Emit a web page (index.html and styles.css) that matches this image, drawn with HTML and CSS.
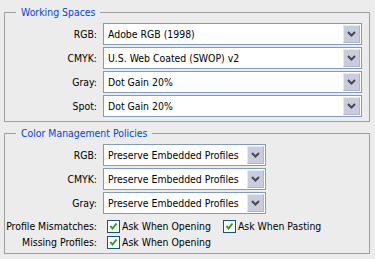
FILE: index.html
```html
<html>
    <head>
        <title>Color Settings</title>
        <link rel="stylesheet" href="styles.css">
    </head>
    <body>
        <div class="dialog">
            <fieldset class="group">
                <legend>Working Spaces</legend>
                <div class="rows">
                    <span class="lbl">RGB:</span>
                    <div class="combo wide"><span class="val">Adobe RGB (1998)</span><span class="btn"><svg width="9" height="6" viewBox="0 0 9 6"><polyline points="1,1 4.5,4.5 8,1" /></svg></span></div>
                    <span class="lbl">CMYK:</span>
                    <div class="combo wide"><span class="val">U.S. Web Coated (SWOP) v2</span><span class="btn"><svg width="9" height="6" viewBox="0 0 9 6"><polyline points="1,1 4.5,4.5 8,1" /></svg></span></div>
                    <span class="lbl">Gray:</span>
                    <div class="combo wide"><span class="val">Dot Gain 20%</span><span class="btn"><svg width="9" height="6" viewBox="0 0 9 6"><polyline points="1,1 4.5,4.5 8,1" /></svg></span></div>
                    <span class="lbl">Spot:</span>
                    <div class="combo wide"><span class="val">Dot Gain 20%</span><span class="btn"><svg width="9" height="6" viewBox="0 0 9 6"><polyline points="1,1 4.5,4.5 8,1" /></svg></span></div>
                </div>
            </fieldset>
            <fieldset class="group second">
                <legend>Color Management Policies</legend>
                <div class="rows">
                    <span class="lbl">RGB:</span>
                    <div class="combo narrow"><span class="val">Preserve Embedded Profiles</span><span class="btn"><svg width="9" height="6" viewBox="0 0 9 6"><polyline points="1,1 4.5,4.5 8,1" /></svg></span></div>
                    <span class="lbl">CMYK:</span>
                    <div class="combo narrow"><span class="val">Preserve Embedded Profiles</span><span class="btn"><svg width="9" height="6" viewBox="0 0 9 6"><polyline points="1,1 4.5,4.5 8,1" /></svg></span></div>
                    <span class="lbl">Gray:</span>
                    <div class="combo narrow"><span class="val">Preserve Embedded Profiles</span><span class="btn"><svg width="9" height="6" viewBox="0 0 9 6"><polyline points="1,1 4.5,4.5 8,1" /></svg></span></div>
                </div>
                <div class="checks">
                    <span class="lbl">Profile Mismatches:</span>
                    <div class="opts">
                        <span class="opt"><span class="box"><svg width="9" height="9" viewBox="0 0 9 9"><polyline points="1.5,4 3.5,6.5 7.5,1.5" /></svg></span>Ask When Opening</span>
                        <span class="opt"><span class="box"><svg width="9" height="9" viewBox="0 0 9 9"><polyline points="1.5,4 3.5,6.5 7.5,1.5" /></svg></span>Ask When Pasting</span>
                    </div>
                    <span class="lbl">Missing Profiles:</span>
                    <div class="opts">
                        <span class="opt"><span class="box"><svg width="9" height="9" viewBox="0 0 9 9"><polyline points="1.5,4 3.5,6.5 7.5,1.5" /></svg></span>Ask When Opening</span>
                    </div>
                </div>
            </fieldset>
        </div>
    </body>
</html>
```

FILE: styles.css
```css
body {
    margin: 0;
    background-color: #ececec;
    font-family: "DejaVu Sans Condensed", "Liberation Sans", sans-serif;
    font-size: 10.4px;
    color: #000;
}
.dialog {
    padding: 6px 5px 0 4px;
}
.group {
    margin: 0;
    padding: 4px 7px 4px 0;
    border: 1px solid #a0a0a0;
    min-width: 0;
}
.second {
    margin-top: 5px;
    padding-bottom: 3px;
}
.group legend {
    margin-left: 11px;
    padding: 0 5px;
    color: #0046d5;
    line-height: 13px;
}
.rows {
    display: grid;
    grid-template-columns: 92px auto;
    column-gap: 6px;
    row-gap: 2px;
    justify-content: start;
}
.lbl {
    text-align: right;
    align-self: center;
    white-space: nowrap;
}
.combo {
    display: flex;
    align-items: stretch;
    height: 22px;
    box-sizing: border-box;
    border: 1px solid #7f9db9;
    background-color: #fff;
}
.wide {
    width: 259px;
}
.narrow {
    width: 163px;
}
.val {
    flex: 1;
    padding-left: 4px;
    line-height: 20px;
    white-space: nowrap;
    overflow: hidden;
}
.btn {
    width: 15px;
    margin: 1px;
    display: flex;
    align-items: center;
    justify-content: center;
    background-color: #c9cbde;
    border: 1px solid #e8e9f2;
    border-right-color: #b4b6c8;
    border-bottom-color: #b4b6c8;
}
.btn polyline {
    fill: none;
    stroke: #4a4a4a;
    stroke-width: 2;
}
.checks {
    display: grid;
    grid-template-columns: 92px auto;
    column-gap: 10px;
    margin-top: 4px;
}
.opts {
    display: flex;
    gap: 12px;
}
.opt {
    display: flex;
    align-items: center;
    height: 16px;
    gap: 2px;
}
.box {
    width: 13px;
    height: 13px;
    box-sizing: border-box;
    border: 1px solid #1c5180;
    background-color: #fff;
    display: flex;
    align-items: center;
    justify-content: center;
}
.box polyline {
    fill: none;
    stroke: #21a121;
    stroke-width: 2;
}
```
